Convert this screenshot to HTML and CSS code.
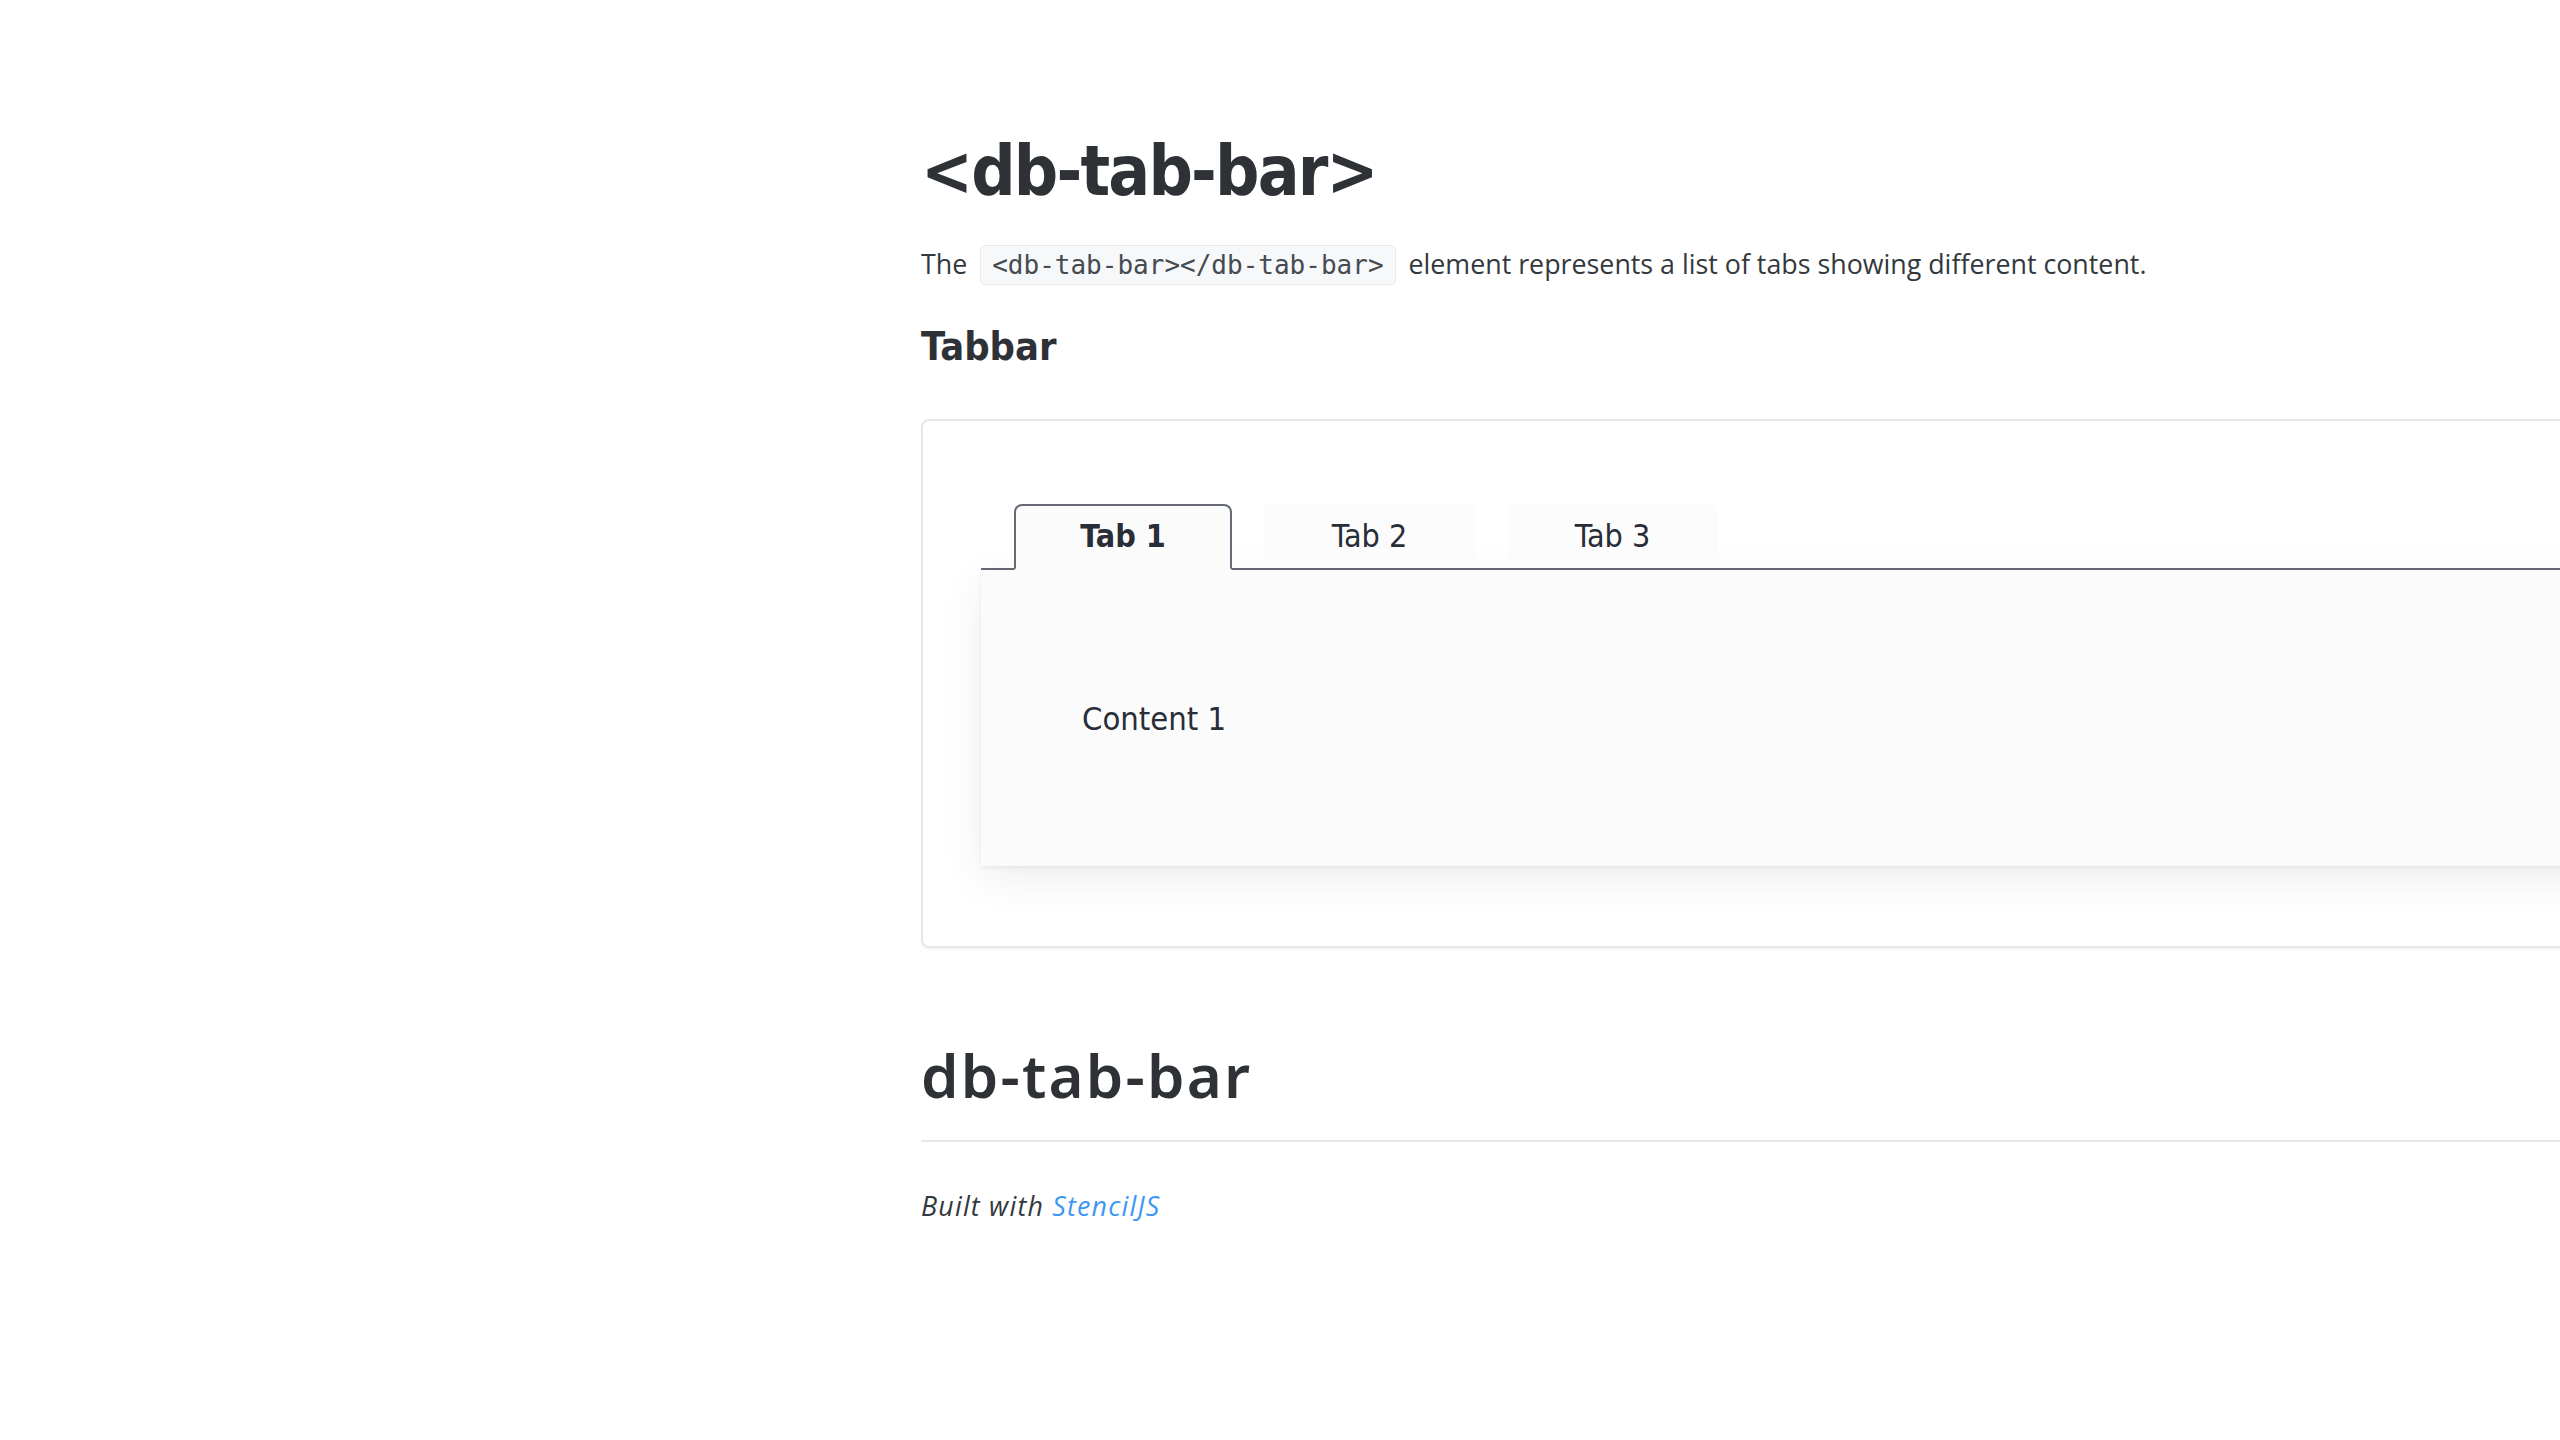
FILE: index.html
```html
<!DOCTYPE html>
<html lang="en">
<head>
<meta charset="utf-8">
<title>db-tab-bar</title>
<link rel="stylesheet" href="styles.css">
</head>
<body>
<main class="page">
  <h1 class="title">&lt;db-tab-bar&gt;</h1>
  <p class="intro">The <code class="code">&lt;db-tab-bar&gt;&lt;/db-tab-bar&gt;</code> element represents a list of tabs showing different content.</p>
  <h2 class="section-title">Tabbar</h2>
  <section class="example">
    <div class="tabbar">
      <div class="tab-list">
        <div class="tab tab-active">Tab 1</div>
        <div class="tab">Tab 2</div>
        <div class="tab">Tab 3</div>
      </div>
      <div class="tab-panel">Content 1</div>
    </div>
  </section>
  <h1 class="component-name">db-tab-bar</h1>
  <p class="built">Built with <a class="link" href="#">StencilJS</a></p>
</main>
</body>
</html>
```

FILE: styles.css
```css
html, body {
  margin: 0;
  padding: 0;
  background: #ffffff;
  overflow: hidden;
}

body {
  font-family: "Open Sans", "Lato", sans-serif;
  color: #33383d;
}

.page {
  margin-left: 921px;
  width: 1900px;
  padding-top: 130px;
}

.title {
  margin: 0;
  font-family: "DejaVu Sans Condensed", "DejaVu Sans", sans-serif;
  font-stretch: condensed;
  font-weight: 700;
  font-size: 69px;
  line-height: 82px;
  letter-spacing: -1.8px;
  color: #2e3237;
}

.intro {
  margin: 32px 0 0;
  font-size: 26.8px;
  line-height: 40px;
  color: #33383d;
}

.code {
  font-family: "DejaVu Sans Mono", "Liberation Mono", monospace;
  font-size: 26px;
  color: #454b51;
  background: #f6f8fa;
  border: 1px solid #e6ebee;
  border-radius: 5px;
  padding: 4px 11px;
  margin: 0 6px;
}

.section-title {
  margin: 37px 0 0;
  font-family: "DejaVu Sans Condensed", "DejaVu Sans", sans-serif;
  font-stretch: condensed;
  font-weight: 700;
  font-size: 39.5px;
  line-height: 48px;
  color: #2e3237;
}

.example {
  margin-top: 49px;
  border: 2px solid #e3e8eb;
  border-radius: 8px;
  padding: 83px 0 80px 58px;
  box-shadow: 0 2px 3px rgba(0, 0, 0, 0.04);
}

.tabbar {
  font-family: "DejaVu Sans Condensed", "DejaVu Sans", sans-serif;
  font-stretch: condensed;
  color: #282d37;
}

.tab-list {
  display: flex;
  gap: 32px;
  padding-left: 33px;
  border-bottom: 2px solid #646973;
}

.tab {
  box-sizing: border-box;
  width: 211px;
  height: 64px;
  text-align: center;
  font-size: 32px;
  line-height: 64px;
  background: #fcfcfc;
  border-radius: 8px 8px 0 0;
}

.tab-active {
  width: 218px;
  position: relative;
  margin-bottom: -2px;
  height: 66px;
  border: 2px solid #646973;
  border-bottom: 2px solid #fbfbfb;
  font-weight: 700;
  line-height: 60px;
  background: #fbfbfb;
  z-index: 1;
}

.tab-panel {
  background: #fbfbfb;
  padding: 129px 101px 127px;
  font-size: 32.5px;
  line-height: 40px;
  box-shadow: 0 12px 40px rgba(0, 0, 0, 0.07), 0 2px 4px rgba(0, 0, 0, 0.06);
}

.component-name {
  margin: 91px 0 0;
  padding-bottom: 29px;
  border-bottom: 2px solid #e3e8eb;
  font-family: "Noto Sans", "Open Sans", sans-serif;
  font-weight: 600;
  font-size: 60px;
  line-height: 72px;
  letter-spacing: 2.2px;
  color: #2e3237;
}

.built {
  margin: 44px 0 0;
  font-size: 26.8px;
  line-height: 40px;
  letter-spacing: 1.2px;
  font-style: italic;
  color: #33383d;
}

.link {
  color: #3d98f4;
  text-decoration: none;
}
```
